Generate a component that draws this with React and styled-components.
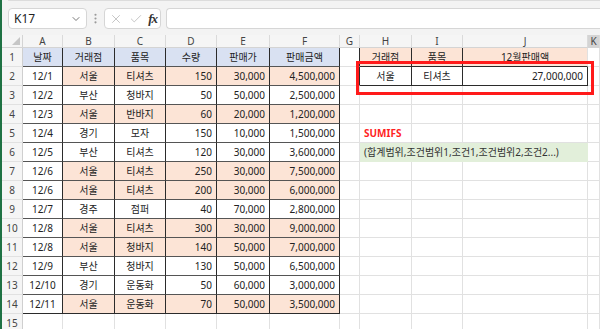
import React from "react"
import styled, { createGlobalStyle } from "styled-components"
import { ChevronDown, X, Check, EllipsisVertical } from "lucide-react"

const GlobalStyle = createGlobalStyle`
    html, body {
        margin: 0;
        padding: 0;
        background: #f3f3f3;
    }
    body {
        font-family: "Noto Sans", "Noto Sans CJK KR", sans-serif;
    }
`

const BLUE = "#d9e1f2"
const PEACH = "#fce4d6"
const GREEN = "#e2efda"
const GRID = "#e1e1e1"
const LINE = "#2b2b2b"

const Window = styled.div`
    width: 598px;
    height: 329px;
    overflow: hidden;
    border-left: 2px solid #1f7244;
    background: #f3f3f3;
    display: flex;
    flex-direction: column;
`

const RibbonEdge = styled.div`
    height: 2px;
    margin-left: 6px;
    background: #fff;
    border: 1px solid #dcdcdc;
    border-top: none;
    border-right: none;
    border-bottom-left-radius: 4px;
`

const FormulaBar = styled.div`
    display: flex;
    align-items: center;
    height: 21px;
    margin-top: 7px;
    padding-left: 6px;
`

const NameBox = styled.div`
    box-sizing: border-box;
    width: 79px;
    height: 21px;
    background: #fff;
    border: 1px solid #d6d6d6;
    border-radius: 4px;
    display: flex;
    align-items: center;
    justify-content: space-between;
    padding: 0 4px 0 5px;
    font-size: 12px;
    color: #222;
`

const Grip = styled.div`
    width: 17px;
    display: flex;
    justify-content: center;
    color: #9a9a9a;
`

const FuncBox = styled.div`
    box-sizing: border-box;
    width: 57px;
    height: 21px;
    background: #fff;
    border: 1px solid #d6d6d6;
    border-radius: 4px;
    display: flex;
    align-items: center;
    justify-content: space-between;
    padding: 0 3px 0 4px;
    color: #b4b4b4;
`

const Fx = styled.span`
    font-family: "Liberation Serif", serif;
    font-style: italic;
    font-weight: bold;
    font-size: 13px;
    color: #333;
    letter-spacing: -1px;
`

const FormulaInput = styled.div`
    box-sizing: border-box;
    flex: 1;
    height: 21px;
    margin-left: 5px;
    background: #fff;
    border: 1px solid #d6d6d6;
    border-right: none;
    border-radius: 4px 0 0 4px;
`

const Sheet = styled.div`
    position: relative;
    margin-top: 6px;
    display: grid;
    grid-template-columns: 21px 40px 52px 51px 51px 53px 70px 20px 52px 51px 125px 1fr;
    grid-template-rows: 13px repeat(15, 19px);
    background: #fff;
`

const Corner = styled.div`
    position: relative;
    background: #f5f5f5;
    border-right: 1px solid #d4d4d4;
    border-bottom: 1px solid #d4d4d4;

    &::after {
        content: "";
        position: absolute;
        right: 2px;
        bottom: 2px;
        border-left: 8px solid transparent;
        border-bottom: 8px solid #c6c6c6;
    }
`

const ColHeader = styled.div`
    box-sizing: border-box;
    background: ${({ $active }) => ($active ? "#d4d4d4" : "#f5f5f5")};
    border-right: 1px solid #dadada;
    border-bottom: 1px solid #d4d4d4;
    font-size: 10px;
    line-height: 12px;
    color: #444;
    text-align: center;
`

const RowHeader = styled.div`
    box-sizing: border-box;
    background: #f5f5f5;
    border-right: 1px solid #cfcfcf;
    border-bottom: 1px solid #e1e1e1;
    font-size: 10px;
    line-height: 19px;
    color: #444;
    text-align: center;
`

const Cell = styled.div`
    box-sizing: border-box;
    grid-column: span ${({ $span }) => $span || 1};
    background: ${({ $fill }) => $fill || "#fff"};
    border-right: 1px solid ${({ $r }) => $r || GRID};
    border-bottom: 1px solid ${({ $b }) => $b || GRID};
    font-size: 10px;
    line-height: 18px;
    color: ${({ $color }) => $color || "#222"};
    font-weight: ${({ $bold }) => ($bold ? 700 : 400)};
    text-align: ${({ $align }) => $align || "center"};
    padding: ${({ $align }) => ($align === "right" ? "0 4px 0 0" : $align === "left" ? "0 0 0 4px" : "0")};
    white-space: nowrap;
    overflow: hidden;
`

const Highlight = styled.div`
    position: absolute;
    left: 354px;
    top: 26px;
    width: 238px;
    height: 34px;
    box-sizing: border-box;
    border: 3px solid #ff1a1a;
    pointer-events: none;
`

const COLS = ["A", "B", "C", "D", "E", "F", "G", "H", "I", "J", "K"]

const SALES = [
    ["12/1", "서울", "티셔츠", "150", "30,000", "4,500,000"],
    ["12/2", "부산", "청바지", "50", "50,000", "2,500,000"],
    ["12/3", "서울", "반바지", "60", "20,000", "1,200,000"],
    ["12/4", "경기", "모자", "150", "10,000", "1,500,000"],
    ["12/5", "부산", "티셔츠", "120", "30,000", "3,600,000"],
    ["12/6", "서울", "티셔츠", "250", "30,000", "7,500,000"],
    ["12/6", "서울", "티셔츠", "200", "30,000", "6,000,000"],
    ["12/7", "경주", "점퍼", "40", "70,000", "2,800,000"],
    ["12/8", "서울", "티셔츠", "300", "30,000", "9,000,000"],
    ["12/8", "서울", "청바지", "140", "50,000", "7,000,000"],
    ["12/9", "부산", "청바지", "130", "50,000", "6,500,000"],
    ["12/10", "경기", "운동화", "50", "60,000", "3,000,000"],
    ["12/11", "서울", "운동화", "70", "50,000", "3,500,000"]
]

const HEADINGS = ["날짜", "거래점", "품목", "수량", "판매가", "판매금액"]

// one spreadsheet row, A..K
const renderRow = (r) => {
    const cells = []
    const rec = r === 1 ? HEADINGS : SALES[r - 2]

    // left table A1:F14
    for (let c = 0; c < 6; c++) {
        if (!rec) {
            cells.push(<Cell key={c} />)
            continue
        }
        const seoul = r > 1 && rec[1] === "서울" && c > 0
        cells.push(
            <Cell
                key={c}
                $fill={r === 1 ? BLUE : seoul ? PEACH : undefined}
                $r={LINE}
                $b={r === 14 ? LINE : "#555"}
                $align={r > 1 && c >= 3 ? "right" : "center"}
            >
                {rec[c]}
            </Cell>
        )
    }

    // G
    cells.push(<Cell key="g" $r={r <= 2 ? LINE : undefined} />)

    // H..J
    if (r === 1) {
        cells.push(<Cell key="h" $fill={PEACH} $r={LINE} $b={LINE}>거래점</Cell>)
        cells.push(<Cell key="i" $fill={PEACH} $r={LINE} $b={LINE}>품목</Cell>)
        cells.push(<Cell key="j" $fill={PEACH} $b={LINE}>12월판매액</Cell>)
    } else if (r === 2) {
        cells.push(<Cell key="h" $r={LINE} $b={LINE}>서울</Cell>)
        cells.push(<Cell key="i" $r={LINE} $b={LINE}>티셔츠</Cell>)
        cells.push(<Cell key="j" $r={LINE} $b={LINE} $align="right">27,000,000</Cell>)
    } else if (r === 5) {
        cells.push(<Cell key="h" $align="left" $color="#ff1f1f" $bold>SUMIFS</Cell>)
        cells.push(<Cell key="i" />)
        cells.push(<Cell key="j" />)
    } else if (r === 6) {
        cells.push(
            <Cell key="h" $span={3} $fill={GREEN} $b={GREEN} $r={GREEN} $align="left" $color="#333">
                (합계범위,조건범위1,조건1,조건범위2,조건2...)
            </Cell>
        )
    } else {
        cells.push(<Cell key="h" />)
        cells.push(<Cell key="i" />)
        cells.push(<Cell key="j" />)
    }

    // K
    cells.push(<Cell key="k" />)
    return cells
}

const App = () => {
    const rows = Array.from({ length: 15 }, (_, i) => i + 1)

    return (
        <>
            <GlobalStyle />
            <Window>
                <RibbonEdge />
                <FormulaBar>
                    <NameBox>
                        <span>K17</span>
                        <ChevronDown size={12} color="#555" strokeWidth={1.6} />
                    </NameBox>
                    <Grip>
                        <EllipsisVertical size={13} strokeWidth={2} />
                    </Grip>
                    <FuncBox>
                        <X size={14} strokeWidth={1.3} />
                        <Check size={14} strokeWidth={1.3} />
                        <Fx>fx</Fx>
                    </FuncBox>
                    <FormulaInput />
                </FormulaBar>
                <Sheet>
                    <Corner />
                    {COLS.map((c) => (
                        <ColHeader key={c} $active={c === "K"}>
                            {c}
                        </ColHeader>
                    ))}
                    {rows.map((r) => (
                        <React.Fragment key={r}>
                            <RowHeader>{r}</RowHeader>
                            {renderRow(r)}
                        </React.Fragment>
                    ))}
                    <Highlight />
                </Sheet>
            </Window>
        </>
    )
}

export default App
